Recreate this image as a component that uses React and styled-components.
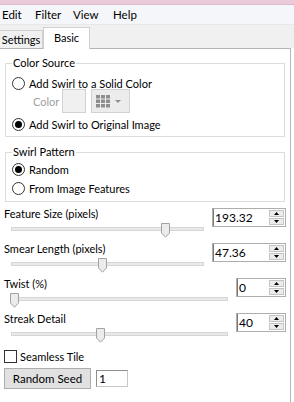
import React from "react";
import styled, { createGlobalStyle } from "styled-components";

const FONT = `Lato, "Liberation Sans", Arial, sans-serif`;

const GlobalStyle = createGlobalStyle`
  html, body {
    margin: 0;
    padding: 0;
    background: #fff;
  }
  body {
    font-family: ${FONT};
    font-size: 11px;
    color: #000;
    width: 294px;
    height: 402px;
    overflow: hidden;
  }
`;

const Window = styled.div`
  display: flex;
  flex-direction: column;
  width: 294px;
  height: 402px;
  background: #fff;
`;

const TitleEdge = styled.div`
  height: 4px;
  background: #ebc9db;
  border-bottom: 1px solid #d9bccb;
`;

const MenuBar = styled.div`
  display: flex;
  align-items: center;
  height: 19px;
  padding-left: 2px;
  background: #f4f6f9;
  border-bottom: 1px solid #e6e8eb;
  font-size: 11.5px;
`;

const MenuItem = styled.span`
  width: ${(p) => p.$w}px;
  line-height: 19px;
`;

const TabStrip = styled.div`
  display: flex;
  align-items: flex-end;
  height: 23px;
  background: #f0f0f0;
`;

const Tab = styled.div`
  box-sizing: border-box;
  display: flex;
  align-items: center;
  justify-content: center;
  width: ${(p) => (p.$active ? 47 : 43)}px;
  height: ${(p) => (p.$active ? 22 : 18)}px;
  background: ${(p) => (p.$active ? "#fff" : "#f0f0f0")};
  border: 1px solid #d0d0d0;
  border-bottom: none;
  border-left: ${(p) => (p.$active ? "1px solid #d0d0d0" : "none")};
  margin-bottom: ${(p) => (p.$active ? "-1px" : "0")};
  position: relative;
  z-index: 1;
  padding-bottom: ${(p) => (p.$active ? 3 : 0)}px;
`;

const Panel = styled.div`
  flex: 1;
  display: flex;
  flex-direction: column;
  width: 291px;
  box-sizing: border-box;
  padding: 0 4px 0 4px;
  border-top: 1px solid #b4b4b4;
  border-right: 1px solid #b4b4b4;
  background: #fff;
`;

const Group = styled.fieldset`
  margin: ${(p) => p.$top}px 1px 0 1px;
  padding: ${(p) => p.$padTop}px 6px ${(p) => p.$padBottom}px 6px;
  border: 1px solid #dcdcdc;
  min-width: 0;
`;

const Legend = styled.legend`
  padding: 0 1px;
  line-height: 14px;
`;

const OptionRow = styled.label`
  display: flex;
  align-items: center;
  height: 13px;
  line-height: 13px;
  margin-top: ${(p) => p.$top || 0}px;
  gap: 4px;
`;

const RadioCircle = styled.span`
  box-sizing: border-box;
  width: 13px;
  height: 13px;
  border-radius: 50%;
  border: 1px solid #333;
  display: flex;
  align-items: center;
  justify-content: center;
  background: #fff;

  &::after {
    content: "";
    width: 7px;
    height: 7px;
    border-radius: 50%;
    background: ${(p) => (p.$checked ? "#000" : "transparent")};
  }
`;

const ColorRow = styled.div`
  display: flex;
  align-items: center;
  height: 24px;
  margin-top: -1px;
  padding-left: 21px;
`;

const DimLabel = styled.span`
  color: #a0a0a0;
  width: 29px;
`;

const Swatch = styled.div`
  box-sizing: border-box;
  width: 24px;
  height: 24px;
  background: #f0f0f0;
  border: 1px solid #d2d2d2;
`;

const GridButton = styled.div`
  box-sizing: border-box;
  display: flex;
  align-items: center;
  gap: 5px;
  width: 39px;
  height: 24px;
  margin-left: 5px;
  padding-left: 4px;
  background: #ececec;
  border: 1px solid #d2d2d2;
`;

const SliderRow = styled.div`
  display: flex;
  align-items: flex-start;
  height: 35px;
`;

const SliderCol = styled.div`
  flex: 1;
  display: flex;
  flex-direction: column;
`;

const SliderLabel = styled.div`
  line-height: 14px;
  height: 14px;
`;

const SliderArea = styled.div`
  height: 21px;
  padding: 0 8px 0 7px;
`;

const Track = styled.div`
  position: relative;
  margin-top: 6px;
  height: 2px;
  background: #e7eaea;
  border: 1px solid #d6d6d6;
`;

const Thumb = styled.svg`
  position: absolute;
  top: -5px;
  margin-left: -4px;
`;

const Numeric = styled.div`
  box-sizing: border-box;
  display: flex;
  width: ${(p) => p.$width}px;
  height: 19px;
  margin-top: 1px;
  border: 1px solid #adadad;
  background: #fff;
`;

const NumericText = styled.div`
  flex: 1;
  padding-left: 1px;
  line-height: 17px;
  font-size: 12px;
  border-left: 1px solid #7a7a7a;
`;

const SpinCol = styled.div`
  display: flex;
  flex-direction: column;
  width: 15px;
  padding: 1px;
  gap: 1px;
`;

const SpinButton = styled.div`
  flex: 1;
  display: flex;
  align-items: center;
  justify-content: center;
  background: #ececec;
  border: 1px solid #c4c4c4;
`;

const CheckRow = styled.label`
  display: flex;
  align-items: center;
  gap: 3px;
  height: 13px;
  line-height: 13px;
  margin-top: 3px;
`;

const CheckBox = styled.span`
  box-sizing: border-box;
  width: 13px;
  height: 13px;
  border: 1px solid #333;
  background: #fff;
`;

const SeedRow = styled.div`
  display: flex;
  align-items: center;
  gap: 5px;
  margin-top: 5px;
`;

const Button = styled.button`
  box-sizing: border-box;
  width: 87px;
  height: 21px;
  padding: 0;
  font: inherit;
  font-size: 11.5px;
  color: #000;
  background: #e1e1e1;
  border: 1px solid #adadad;
`;

const TextBox = styled.div`
  box-sizing: border-box;
  width: 32px;
  height: 17px;
  padding-left: 2px;
  line-height: 15px;
  font-size: 12px;
  border: 1px solid #8f8f8f;
  border-right-color: #c8c8c8;
  border-bottom-color: #c8c8c8;
`;

const Spacer = styled.div`
  height: ${(p) => p.$h}px;
  flex-shrink: 0;
`;

const Arrow = ({ up }) => (
  <svg width="5" height="3" viewBox="0 0 5 3">
    <path d={up ? "M0 3 L2.5 0 L5 3 Z" : "M0 0 L2.5 3 L5 0 Z"} fill="#000" />
  </svg>
);

const GridIcon = () => (
  <svg width="14" height="13" viewBox="0 0 14 13">
    {[0, 1, 2].map((r) =>
      [0, 1, 2].map((c) => (
        <rect key={`${r}${c}`} x={c * 5} y={r * 4.5} width="4" height="3.5" fill="#8e8e8e" />
      ))
    )}
  </svg>
);

const Radio = ({ checked, children, top }) => (
  <OptionRow $top={top}>
    <RadioCircle $checked={checked} />
    <span>{children}</span>
  </OptionRow>
);

const Slider = ({ label, value, pos, width }) => (
  <SliderRow>
    <SliderCol>
      <SliderLabel>{label}</SliderLabel>
      <SliderArea>
        <Track>
          <Thumb width="9" height="15" viewBox="0 0 9 15" style={{ left: `${pos * 100}%` }}>
            <path d="M0.5 0.5 H8.5 V10 L4.5 14.2 L0.5 10 Z" fill="#ececec" stroke="#a3a3a3" />
          </Thumb>
        </Track>
      </SliderArea>
    </SliderCol>
    <Numeric $width={width}>
      <NumericText>{value}</NumericText>
      <SpinCol>
        <SpinButton>
          <Arrow up />
        </SpinButton>
        <SpinButton>
          <Arrow />
        </SpinButton>
      </SpinCol>
    </Numeric>
  </SliderRow>
);

const App = () => {
  return (
    <Window>
      <GlobalStyle />
      <TitleEdge />
      <MenuBar>
        <MenuItem $w={33}>Edit</MenuItem>
        <MenuItem $w={38}>Filter</MenuItem>
        <MenuItem $w={40}>View</MenuItem>
        <MenuItem $w={30}>Help</MenuItem>
      </MenuBar>
      <TabStrip>
        <Tab>Settings</Tab>
        <Tab $active>Basic</Tab>
      </TabStrip>
      <Panel>
        <Group $top={7} $padTop={7} $padBottom={5}>
          <Legend>Color Source</Legend>
          <Radio>Add Swirl to a Solid Color</Radio>
          <ColorRow>
            <DimLabel>Color</DimLabel>
            <Swatch />
            <GridButton>
              <GridIcon />
              <svg width="6" height="3" viewBox="0 0 6 3">
                <path d="M0 0 L3 3 L6 0 Z" fill="#8e8e8e" />
              </svg>
            </GridButton>
          </ColorRow>
          <Radio checked top={5}>
            Add Swirl to Original Image
          </Radio>
        </Group>
        <Group $top={8} $padTop={4} $padBottom={6}>
          <Legend>Swirl Pattern</Legend>
          <Radio checked>Random</Radio>
          <Radio top={6}>From Image Features</Radio>
        </Group>
        <Spacer $h={5} />
        <Slider label="Feature Size (pixels)" value="193.32" pos={0.8} width={74} />
        <Slider label="Smear Length (pixels)" value="47.36" pos={0.47} width={74} />
        <Slider label="Twist (%)" value="0" pos={0.01} width={50} />
        <Slider label="Streak Detail" value="40" pos={0.41} width={50} />
        <CheckRow>
          <CheckBox />
          <span>Seamless Tile</span>
        </CheckRow>
        <SeedRow>
          <Button>Random Seed</Button>
          <TextBox>1</TextBox>
        </SeedRow>
      </Panel>
    </Window>
  );
};

export default App;
